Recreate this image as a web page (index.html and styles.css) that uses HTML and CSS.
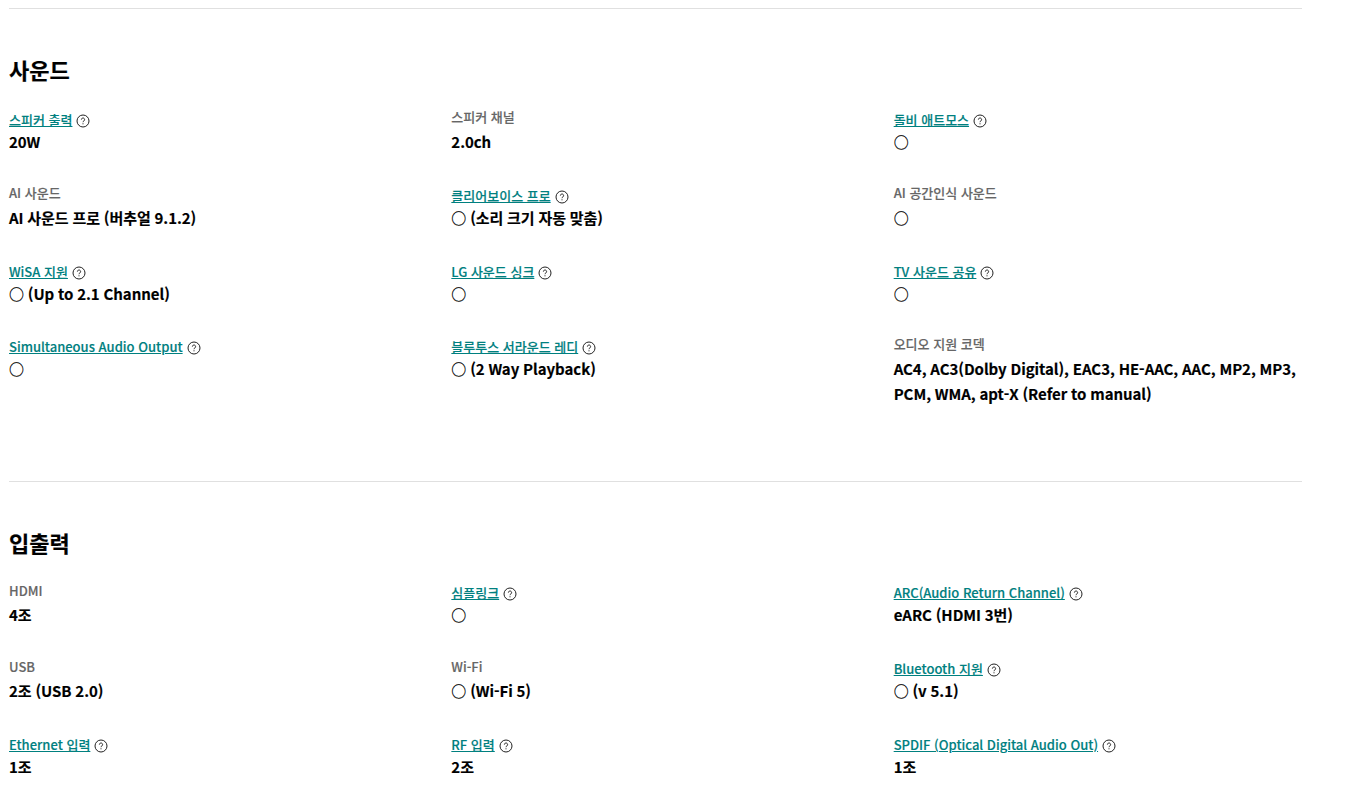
FILE: index.html
```html
<!DOCTYPE html>
<html lang="ko">
<head>
<meta charset="utf-8">
<title>사양</title>
<link rel="stylesheet" href="styles.css">
</head>
<body>
<svg class="defs" width="0" height="0" aria-hidden="true">
  <symbol id="q" viewBox="0 0 14 14">
    <circle cx="7" cy="7" r="6" fill="none" stroke="#222" stroke-width="1"/>
    <path d="M5.4 5.6a1.6 1.6 0 1 1 2.5 1.3c-.6.4-.9.7-.9 1.3" fill="none" stroke="#222" stroke-width="1"/>
    <rect x="6.5" y="9.3" width="1" height="1" fill="#222"/>
  </symbol>
</svg>
<main class="page">
  <section class="spec">
    <h2>사운드</h2>
    <div class="grid">
      <div class="item"><div class="head link"><a class="lnk" href="#">스피커 출력</a><svg class="q"><use href="#q"/></svg></div><p class="val">20W</p></div>
      <div class="item"><div class="head"><span class="lbl">스피커 채널</span></div><p class="val">2.0ch</p></div>
      <div class="item"><div class="head link"><a class="lnk" href="#">돌비 애트모스</a><svg class="q"><use href="#q"/></svg></div><p class="val">○</p></div>
      <div class="item"><div class="head"><span class="lbl">AI 사운드</span></div><p class="val">AI 사운드 프로 (버추얼 9.1.2)</p></div>
      <div class="item"><div class="head link"><a class="lnk" href="#">클리어보이스 프로</a><svg class="q"><use href="#q"/></svg></div><p class="val">○ (소리 크기 자동 맞춤)</p></div>
      <div class="item"><div class="head"><span class="lbl">AI 공간인식 사운드</span></div><p class="val">○</p></div>
      <div class="item"><div class="head link"><a class="lnk" href="#">WiSA 지원</a><svg class="q"><use href="#q"/></svg></div><p class="val">○ (Up to 2.1 Channel)</p></div>
      <div class="item"><div class="head link"><a class="lnk" href="#">LG 사운드 싱크</a><svg class="q"><use href="#q"/></svg></div><p class="val">○</p></div>
      <div class="item"><div class="head link"><a class="lnk" href="#">TV 사운드 공유</a><svg class="q"><use href="#q"/></svg></div><p class="val">○</p></div>
      <div class="item"><div class="head link"><a class="lnk" href="#">Simultaneous Audio Output</a><svg class="q"><use href="#q"/></svg></div><p class="val">○</p></div>
      <div class="item"><div class="head link"><a class="lnk" href="#">블루투스 서라운드 레디</a><svg class="q"><use href="#q"/></svg></div><p class="val">○ (2 Way Playback)</p></div>
      <div class="item"><div class="head"><span class="lbl">오디오 지원 코덱</span></div><p class="val">AC4, AC3(Dolby Digital), EAC3, HE-AAC, AAC, MP2, MP3, PCM, WMA, apt-X (Refer to manual)</p></div>
    </div>
  </section>
  <section class="spec">
    <h2>입출력</h2>
    <div class="grid">
      <div class="item"><div class="head"><span class="lbl">HDMI</span></div><p class="val">4조</p></div>
      <div class="item"><div class="head link"><a class="lnk" href="#">심플링크</a><svg class="q"><use href="#q"/></svg></div><p class="val">○</p></div>
      <div class="item"><div class="head link"><a class="lnk" href="#">ARC(Audio Return Channel)</a><svg class="q"><use href="#q"/></svg></div><p class="val">eARC (HDMI 3번)</p></div>
      <div class="item"><div class="head"><span class="lbl">USB</span></div><p class="val">2조 (USB 2.0)</p></div>
      <div class="item"><div class="head"><span class="lbl">Wi-Fi</span></div><p class="val">○ (Wi-Fi 5)</p></div>
      <div class="item"><div class="head link"><a class="lnk" href="#">Bluetooth 지원</a><svg class="q"><use href="#q"/></svg></div><p class="val">○ (v 5.1)</p></div>
      <div class="item"><div class="head link"><a class="lnk" href="#">Ethernet 입력</a><svg class="q"><use href="#q"/></svg></div><p class="val">1조</p></div>
      <div class="item"><div class="head link"><a class="lnk" href="#">RF 입력</a><svg class="q"><use href="#q"/></svg></div><p class="val">2조</p></div>
      <div class="item"><div class="head link"><a class="lnk" href="#">SPDIF (Optical Digital Audio Out)</a><svg class="q"><use href="#q"/></svg></div><p class="val">1조</p></div>
    </div>
  </section>
</main>
</body>
</html>
```
FILE: styles.css
```css
html, body { margin: 0; padding: 0; background: #fff; }
body { font-family: "Noto Sans CJK KR", "Noto Sans", sans-serif; color: #000; height: 794px; overflow: hidden; }
.defs { position: absolute; }
.page { padding: 8px 46px 0 9px; }
.spec { border-top: 1px solid #e0e0e0; padding-bottom: 74.5px; }
.spec:last-child { padding-bottom: 0; }
.spec:last-child .head:not(.link) { padding-top: 1px; box-sizing: border-box; }
h2 { margin: 0; padding-top: 44px; font-size: 22px; line-height: 32px; font-weight: 700; -webkit-text-stroke: 0.2px #000; }
.grid { display: grid; grid-template-columns: repeat(3, 1fr); column-gap: 34px; row-gap: 30.7px; margin-top: 24.4px; }
.item { font-size: 13px; min-width: 0; }
.head { height: 20px; line-height: 16px; }
.head.link { padding-top: 3px; box-sizing: border-box; }
.lnk { color: #00807f; font-weight: 500; text-decoration: underline; -webkit-text-stroke: 0.15px #00807f; }
.lbl { color: #666; font-weight: 500; -webkit-text-stroke: 0.15px #666; }
.q { width: 14px; height: 14px; margin-left: 4px; vertical-align: -3px; }
.val { margin: 0; font-size: 15px; line-height: 25px; font-weight: 700; color: #000; letter-spacing: -0.05px; word-spacing: -0.3px; -webkit-text-stroke: 0.15px #000; }
```
